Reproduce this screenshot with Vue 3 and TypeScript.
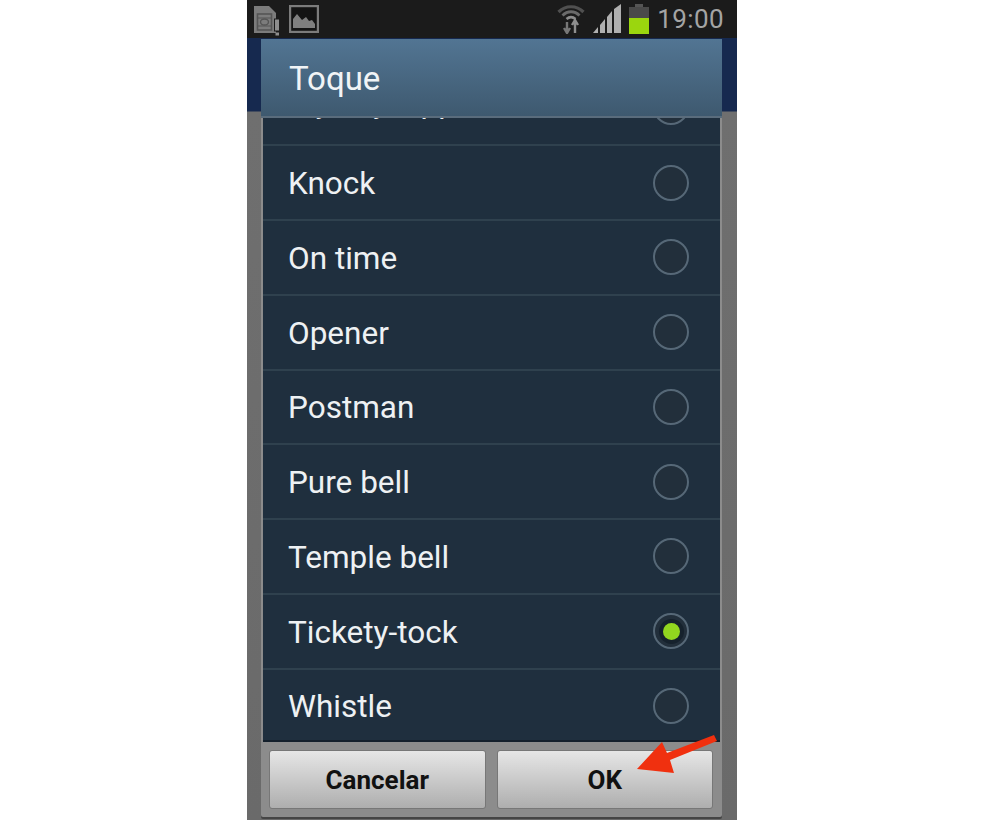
<script setup lang="ts">
interface Tone { name: string; selected?: boolean }
const tones: Tone[] = [
  { name: 'Knock' },
  { name: 'On time' },
  { name: 'Opener' },
  { name: 'Postman' },
  { name: 'Pure bell' },
  { name: 'Temple bell' },
  { name: 'Tickety-tock', selected: true },
  { name: 'Whistle' },
]
</script>

<template>
  <div class="page">
    <div class="phone">
      <div class="status">
        <div class="status-left">
          <svg class="ic-sim" viewBox="0 0 27 31" width="27" height="31">
            <path d="M1 1h15l7 7v20H1z" fill="#7c7c7c" />
            <rect x="4.500" y="9" width="14" height="16" fill="none" stroke="#555" stroke-width="1.600" />
            <path d="M4.500 13h14M4.500 21h14" stroke="#555" stroke-width="1" />
            <ellipse cx="11.500" cy="17" rx="4" ry="3" fill="#7c7c7c" stroke="#555" stroke-width="1.400" />
            <rect x="21.500" y="14" width="5" height="12" fill="#8e8e8e" stroke="#1b1b1b" stroke-width="1" />
            <rect x="22.500" y="27.500" width="3.500" height="3" fill="#8e8e8e" />
          </svg>
          <svg class="ic-pic" viewBox="0 0 30 28" width="30" height="28">
            <rect x="1" y="1" width="28" height="26" fill="#141414" stroke="#7c7c7c" stroke-width="2.400" />
            <path d="M4 23V14l4-5 5 6 4-3 3 4 3-1 3 4v4z" fill="#7f7f7f" />
          </svg>
        </div>
        <div class="status-right">
          <svg class="ic-wifi" viewBox="0 0 28 30" width="28" height="30">
            <path d="M1.500 8C8.500 1 19.500 1 26.500 8" fill="none" stroke="#505050" stroke-width="3.200" />
            <path d="M5.500 11.500c5-5 12-5 17 0" fill="none" stroke="#6a6a6a" stroke-width="2.800" />
            <path d="M9.500 15c3-2.500 6-2.500 9 0" fill="none" stroke="#8c8c8c" stroke-width="2.600" />
            <path d="M10 18v10M7 24l3 5 3-5" fill="none" stroke="#777" stroke-width="2.400" />
            <path d="M18 29v-11M15 21l3-5 3 5" fill="none" stroke="#8f8f8f" stroke-width="2.400" />
          </svg>
          <svg class="ic-sig" viewBox="0 0 30 30" width="30" height="30">
            <path d="M0 29l5-6v6z" fill="#b0b0b0" />
            <path d="M7 29v-8l5-6v14z" fill="#b0b0b0" />
            <path d="M14 29V13l5-6v22z" fill="#b0b0b0" />
            <path d="M21 29V5l7-5v29z" fill="#b0b0b0" />
          </svg>
          <div class="battery"><div class="battery-cap"></div><div class="battery-body"><div class="battery-fill"></div></div></div>
          <span class="clock">19:00</span>
        </div>
      </div>
      <div class="backdrop">
        <div class="dialog">
          <div class="dialog-title">Toque</div>
          <div class="list">
            <div class="row partial">
              <span class="name">My day hipp</span>
              <span class="radio"></span>
            </div>
            <div v-for="tone in tones" :key="tone.name" class="row">
              <span class="name">{{ tone.name }}</span>
              <span class="radio" :class="{ on: tone.selected }"></span>
            </div>
          </div>
          <div class="actions">
            <button class="btn" type="button">Cancelar</button>
            <button class="btn" type="button">OK</button>
          </div>
        </div>
        <svg class="arrow" viewBox="0 0 90 50" width="90" height="50">
          <path d="M7 39L32 12l5 11L84 5l3 6-47 19 4 13z" fill="#f0300f" />
        </svg>
      </div>
    </div>
  </div>
</template>

<style scoped>
.page {
  width: 984px;
  height: 820px;
  background: #fff;
  display: flex;
  overflow: hidden;
  font-family: Roboto, "Liberation Sans", sans-serif;
}
.phone {
  width: 490px;
  margin-left: 247px;
  height: 820px;
  display: flex;
  flex-direction: column;
  background: #777;
}
.status {
  height: 38px;
  flex: none;
  background: #1b1b1b;
  display: flex;
  justify-content: space-between;
  align-items: center;
  padding: 0 13px 0 6px;
}
.status-left, .status-right { display: flex; align-items: center; }
.status-left { gap: 9px; }
.ic-sim { margin-top: 2px; }
.ic-wifi { margin-right: 8px; margin-top: -1px; }
.ic-sig { margin-right: 6px; }
.battery { width: 20px; height: 30px; display: flex; flex-direction: column; align-items: center; margin-right: 8px; }
.battery-cap { width: 8px; height: 3px; background: #555; }
.battery-body { width: 20px; flex: 1; background: #4a4a4a; display: flex; align-items: flex-end; }
.battery-fill { width: 100%; height: 16px; background: #9bd60e; }
.clock { font-size: 26px; color: #a4a4a4; letter-spacing: .4px; }
.backdrop {
  position: relative;
  flex: 1;
  background: linear-gradient(to bottom, #16294f 0, #16294f 73px, #6f6f6f 74px, #6a6a6a 100%);
  padding: 1px 15px 0 14px;
}
.dialog {
  height: 778px;
  background: #8c8c8c;
  display: flex;
  flex-direction: column;
  border-radius: 2px;
  box-shadow: 0 2px 0 #454545;
}
.dialog-title {
  flex: none;
  height: 79px;
  line-height: 79px;
  padding-left: 28px;
  font-size: 33px;
  color: #f1f4f6;
  background: linear-gradient(to bottom, #527593, #3e596f);
  border-bottom: 2px solid #5a6c7c;
  box-sizing: border-box;
}
.list {
  flex: none;
  height: 624px;
  margin: 0 2px;
  background: #1f2f3e;
  overflow: hidden;
  border-bottom: 2px solid #14202c;
  box-sizing: border-box;
}
.row {
  height: 74.75px;
  box-sizing: border-box;
  border-top: 2px solid #2f414e;
  display: flex;
  justify-content: space-between;
  align-items: center;
  padding: 0 31px 0 25px;
  font-size: 31.5px;
  color: #eef1f3;
}
.name { margin-top: 2px; }
.partial { margin-top: -48.5px; border-top: none; }
.partial .name { margin-bottom: 10px; }
.radio {
  width: 36px;
  height: 36px;
  box-sizing: border-box;
  border: 2px solid #566877;
  border-radius: 50%;
  background: #222f3b;
  display: flex;
  align-items: center;
  justify-content: center;
}
.radio.on::after {
  content: "";
  width: 17px;
  height: 17px;
  border-radius: 50%;
  background: #92d61f;
  box-shadow: 0 0 0 4px #16222d;
}
.actions {
  flex: 1;
  display: flex;
  gap: 11px;
  padding: 8px 9px 8px 8px;
}
.btn {
  flex: 1 1 0;
  border: 1px solid #777;
  border-radius: 3px;
  background: linear-gradient(to bottom, #e6e6e6, #aeaeae);
  font: 700 26px Roboto, "Liberation Sans", sans-serif;
  color: #111;
  padding: 0;
}
.arrow {
  position: absolute;
  left: 383px;
  top: 692px;
}
</style>

<style>
html, body { margin: 0; background: #fff; }
</style>
